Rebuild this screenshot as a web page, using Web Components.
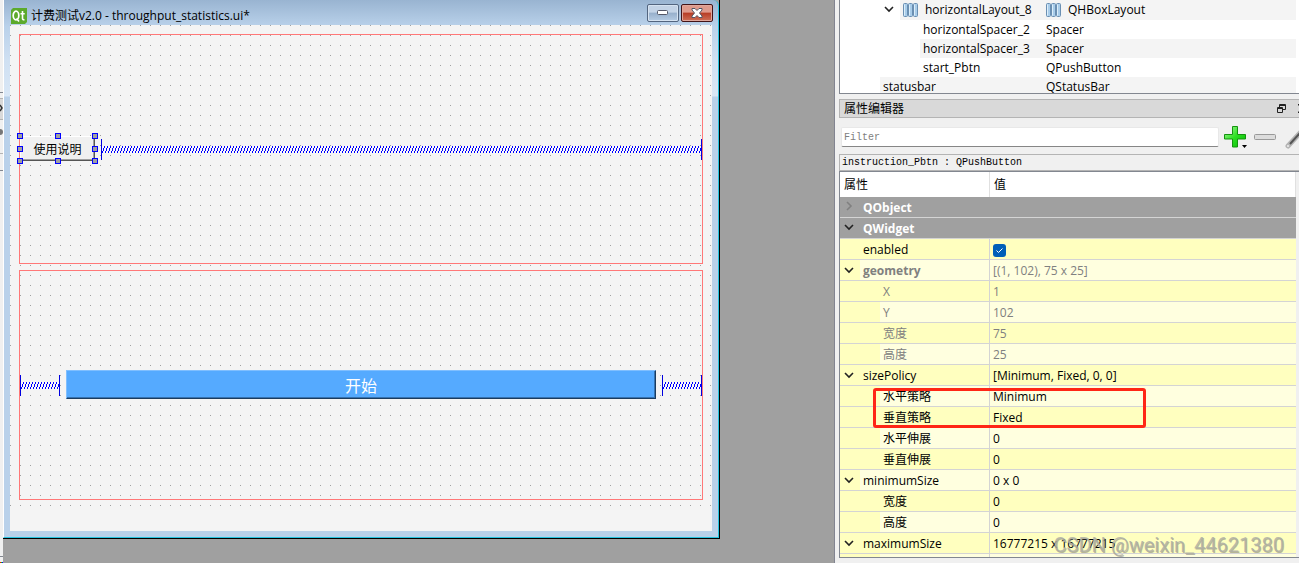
<!DOCTYPE html>
<html lang="zh-CN">
<head>
<meta charset="utf-8">
<title>Qt Designer</title>
<style>
html, body { height: 100%; margin: 0; }
body { display: flex; overflow: hidden; background: #f0f0f0; color: #000; font: 12px/16px "Open Sans", "Noto Sans CJK SC", sans-serif; }
</style>
</head>
<body>
<edge-strip></edge-strip>
<form-stage>
  <form-window heading="计费测试v2.0 - throughput_statistics.ui*">
    <layout-box>
      <push-button selected>使用说明</push-button>
      <h-spacer grow></h-spacer>
    </layout-box>
    <layout-box>
      <h-spacer></h-spacer>
      <push-button primary>开始</push-button>
      <h-spacer></h-spacer>
    </layout-box>
  </form-window>
</form-stage>
<side-panel>
  <object-tree></object-tree>
  <dock-title>属性编辑器</dock-title>
  <filter-bar></filter-bar>
  <object-label>instruction_Pbtn : QPushButton</object-label>
  <property-table></property-table>
</side-panel>
<water-mark>CSDN @weixin_44621380</water-mark>

<script>
const define = (name, html, setup) => customElements.define(name, class extends HTMLElement {
  connectedCallback() {
    if (this.shadowRoot) return;
    const root = this.attachShadow({ mode: "open" });
    root.innerHTML = html;
    if (setup) setup(root, this);
  }
});

define("edge-strip", `
<style>
:host { flex: none; width: 3px; display: flex; flex-direction: column; background: #f0f0f0; }
.a { height: 92px; border-bottom: 1px solid #828790; }
.b { height: 22px; margin-top: 5px; background: #d9d9d9; border: solid #b4b4b4; border-width: 1px 0; box-sizing: border-box; overflow: hidden; }
.c { height: 33px; border-bottom: 1px solid #b4b4b4; }
.d { height: 16px; border-bottom: 1px solid #828790; }
.e { flex: 1; }
.f { height: 5px; border-top: 1px solid #828790; }
.g { height: 1px; background: linear-gradient(90deg, #f00 33%, #0c0 33% 66%, #00f 66%); }
svg { display: block; }
</style>
<div class="a"></div>
<div class="b"><svg width="3" height="20"><path d="M0 6l2 3-2 3" fill="none" stroke="#333" stroke-width="1.5"/></svg></div>
<div class="c"><svg width="3" height="33"><circle cx="0" cy="12" r="3" fill="#777"/></svg></div>
<div class="d"></div><div class="e"></div><div class="f"></div><div class="g"></div>`);

define("form-stage", `
<style>
:host { flex: 1; min-width: 0; display: flex; background: #a0a0a0; border-right: 1px solid #828490; padding: 0 114px 24px 0; }
</style><slot></slot>`);

define("form-window", `
<style>
:host { flex: 1; min-width: 0; display: flex; flex-direction: column; box-sizing: border-box;
  border: solid #000; border-width: 0 1px 1px 0; }
.frame { flex: 1; display: flex; flex-direction: column; padding: 0 6px 6px; border: solid #27c4e0; border-width: 0 1px 1px 0; border-left: 1px solid #fff;
  background: linear-gradient(#99b4d1, #b9d1ea 26px, #cfe0f2 60px, #d9e7f6 96px, #b9d1ea 97px); border-top-right-radius: 6px; }
header { height: 25px; display: flex; align-items: center; gap: 4px; box-sizing: border-box; padding: 8px 0 2px 1px; }
header svg { display: block; flex: none; }
h1 { margin: 0; flex: 1; font: 12px/16px "Open Sans", "Noto Sans CJK SC", sans-serif; white-space: nowrap; }
.controls { display: flex; gap: 2px; align-self: flex-start; margin-top: -4px; margin-right: -1px; }
button { padding: 0; width: 32px; height: 18px; box-sizing: border-box; border: 1px solid #53657f; border-radius: 2px; box-shadow: inset 0 0 0 1px #d6e3f1; background: linear-gradient(#c3d3e6 45%, #97afcb 50%, #b5cbe3); display: grid; place-items: center; }
.close { border-color: #431418; box-shadow: inset 0 0 0 1px #e0a79c; background: linear-gradient(#df9a8c 45%, #b73c25 50%, #cf7058); }
.body { flex: 1; display: flex; flex-direction: column; background: #f4f4f4; }
main { flex: 1; display: flex; flex-direction: column; gap: 6px; padding: 9px;
  background: conic-gradient(from 270deg at 1px 1px, #a0a0a0 90deg, transparent 0) 0 0 / 10px 10px; }
footer { height: 22px; }
</style>
<div class="frame">
  <header>
    <svg width="16" height="16" viewBox="0 0 16 16"><path d="M2 0h14v14l-2 2H0V2z" fill="#5caa2c"/><g fill="none" stroke="#fff"><ellipse cx="5" cy="7.500" rx="2.800" ry="4.300" stroke-width="1.700"/><path d="M5.500 10.500l2.500 3M11.500 3v7.500q0 1.500 2 1.200M9.500 5.800h4.200" stroke-width="1.600"/></g></svg>
    <h1></h1>
    <div class="controls">
      <button aria-label="最小化"><svg width="12" height="6"><rect x=".5" y=".5" width="10" height="4" rx="1" fill="#fff" stroke="#535666"/></svg></button>
      <button class="close" aria-label="关闭"><svg width="12" height="10" viewBox="0 0 12 10"><path d="M1 .5h3L6 2.500 8 .5h3v1.500L8.500 5 11 8v1.500H8L6 7.500 4 9.500H1V8l2.500-3L1 2z" fill="#fff" stroke="#535666"/></svg></button>
    </div>
  </header>
  <div class="body"><main><slot></slot></main><footer></footer></div>
</div>`, (r, el) => { r.querySelector("h1").textContent = el.getAttribute("heading"); });

define("layout-box", `
<style>
:host { flex: 1; display: flex; align-items: center; gap: 6px; box-sizing: border-box; border: 1px solid #ff7878; }
</style><slot></slot>`);

define("h-spacer", `
<style>
:host { flex: none; width: 40px; height: 21px; box-sizing: border-box; border: solid #0000e0; border-width: 0 1px; }
:host([grow]) { flex: 1; }
svg { display: block; width: 100%; height: 21px; }
</style>
<svg><defs><pattern id="p" width="3" height="21" patternUnits="userSpaceOnUse"><g shape-rendering="crispEdges"><rect y="7" width="3" height="7" fill="#fafafa"/><path d="M2 7h1v2h-1zM1 9h1v3h-1zM0 12h1v2h-1z" fill="#0000ff"/></g></pattern></defs><rect width="100%" height="21" fill="url(#p)"/></svg>`);

define("push-button", `
<style>
:host { position: relative; display: block; flex: none; width: 75px; height: 25px; margin-bottom: 1px; }
button { display: block; width: 100%; height: 100%; box-sizing: border-box; padding: 0; border: 1px solid; border-color: #fff #555 #555 #fff; box-shadow: inset -1px -1px #a0a0a0; background: #f0f0f0; color: #000; font: 12px/16px "Noto Sans CJK SC", sans-serif; }
:host([primary]) { flex: 1; height: 29px; }
:host([primary]) button { background: #55aaff; color: #fff; border-color: #80bfff #1a3c60 #1a3c60 #80bfff; box-shadow: inset -1px -1px #3672b0; font-size: 16px; line-height: 24px; }
.grips { display: none; }
:host([selected]) .grips { position: absolute; inset: -3px; display: grid; grid-template-columns: repeat(3, 6px); justify-content: space-between; align-content: space-between; pointer-events: none; }
i { width: 6px; height: 6px; box-sizing: border-box; border: 1px solid #00f; background: #a0a0a0; }
i:nth-child(5) { visibility: hidden; }
</style>
<button><slot></slot></button><div class="grips">${"<i></i>".repeat(9)}</div>`);

define("side-panel", `
<style>
:host { flex: none; width: 460px; padding-left: 4px; display: flex; flex-direction: column; overflow: hidden; }
</style><slot></slot>`);

const columnsIcon = `<svg width="15" height="14" viewBox="0 0 15 14"><g fill="#a9cdea" stroke="#6a8fb2"><rect x=".5" y=".5" width="4" height="13" rx="1"/><rect x="5.500" y=".5" width="4" height="13" rx="1"/><rect x="10.500" y=".5" width="4" height="13" rx="1"/></g><path d="M1.500 1.500v11M6.500 1.500v11M11.500 1.500v11" stroke="#dceefa"/></svg>`;
const chevron = `<svg class="chev" width="10" height="10" viewBox="0 0 10 10"><path d="M1 3l4 4 4-4" fill="none" stroke="currentColor" stroke-width="1.600"/></svg>`;

define("object-tree", `
<style>
:host { display: block; height: 94px; box-sizing: border-box; border: solid #828790; border-width: 0 0 1px 1px; background: #fff; padding-right: 3px; overflow: hidden; }
table { width: 100%; border-collapse: collapse; table-layout: fixed; }
tr { height: 19px; }
tr:first-child { height: 20px; }
td { padding: 0; white-space: nowrap; line-height: 18px; }
td:first-child { width: 203px; }
.cell { display: flex; align-items: center; gap: 7px; height: 19px; box-sizing: border-box; padding-left: 3px; }
tr:first-child .cell { height: 20px; }
.alt .cell, .alt td + td { background: #f4f4f4; }
.d1 { margin-left: 40px; }
.d2 { margin-left: 60px; position: relative; }
.d2 .chev { position: absolute; left: -16px; top: 4px; color: #222; }
.d3 { margin-left: 80px; }
</style>
<table><tbody>
<tr class="alt"><td><div class="cell d2">${chevron}${columnsIcon}horizontalLayout_8</div></td><td><div class="cell">${columnsIcon}QHBoxLayout</div></td></tr>
<tr><td><div class="cell d3">horizontalSpacer_2</div></td><td><div class="cell">Spacer</div></td></tr>
<tr class="alt"><td><div class="cell d3">horizontalSpacer_3</div></td><td><div class="cell">Spacer</div></td></tr>
<tr><td><div class="cell d3">start_Pbtn</div></td><td><div class="cell">QPushButton</div></td></tr>
<tr class="alt"><td><div class="cell d1">statusbar</div></td><td><div class="cell">QStatusBar</div></td></tr>
</tbody></table>`);

define("dock-title", `
<style>
:host { display: flex; align-items: center; gap: 12px; margin-top: 5px; height: 19px; box-sizing: border-box; border: 1px solid #b4b4b4; border-right: 0; background: #d9d9d9; padding-left: 4px; }
h2 { flex: 1; margin: 0; font: inherit; }
button { border: 0; padding: 0; background: none; height: 10px; display: block; }
svg { display: block; }
</style>
<h2><slot></slot></h2>
<button aria-label="浮动"><svg width="9" height="9"><g fill="none" stroke="#222"><path d="M2.500 3V.5h6v5H6M2 1.500h7"/><path d="M.5 3.500h5v5h-5zM0 4.500h6"/></g></svg></button>
<button aria-label="关闭"><svg width="1" height="9"><path d="M0 0l4 4.500L0 9" fill="none" stroke="#222" stroke-width="1.300"/></svg></button>`);

define("filter-bar", `
<style>
:host { display: flex; align-items: center; height: 36px; box-sizing: border-box; padding: 2px 0 0 2px; gap: 5px; }
input { flex: 1; min-width: 0; height: 20px; box-sizing: border-box; margin: 0; padding: 0 2px; border: 1px solid #e8e8e8; border-bottom-color: #868686; border-radius: 2px; background: #fff; font: 10px/16px "Liberation Mono", monospace; outline: 0; }
input::placeholder { color: #808080; opacity: 1; }
button { border: 0; padding: 0; background: none; display: block; }
svg { display: block; }
.minus { margin-left: 1px; }
.tool { margin-left: 4px; }
</style>
<input type="text" placeholder="Filter" aria-label="Filter">
<button aria-label="添加"><svg width="24" height="24" viewBox="0 0 24 24"><defs><linearGradient id="g" x2="1" y2="1"><stop offset="0" stop-color="#b4f8a8"/><stop offset=".5" stop-color="#2be020"/><stop offset="1" stop-color="#06b806"/></linearGradient></defs><path d="M8.500 1.500h5v8h8v4.500h-8v8h-5v-8h-8V9.500h8z" fill="url(#g)" stroke="#15930f"/><path d="M18 20h5l-2.500 3z" fill="#000"/></svg></button>
<button class="minus" aria-label="删除"><svg width="22" height="8"><rect x=".5" y="1.500" width="21" height="5" rx="1" fill="#dcdcdc" stroke="#999"/></svg></button>
<button class="tool" aria-label="设置"><svg width="14" height="24" viewBox="0 0 14 24"><path d="M3 21L15 8" stroke="#b4b4b4" stroke-width="5" stroke-linecap="round"/><path d="M5 19L15 8" stroke="#555" stroke-width="2"/><circle cx="3" cy="21" r="1" fill="#eee"/></svg></button>`);

define("object-label", `
<style>
:host { display: block; height: 17px; box-sizing: border-box; border: 1px solid #b4b4b4; border-right: 0; padding-left: 2px; font: 10px/15px "Liberation Mono", monospace; white-space: nowrap; }
</style><slot></slot>`);

// [name, value, kind]; kind lists the classes of the row
const rows = [
  ["QObject", null, "group shut"], ["QWidget", null, "group open"],
  ["enabled", true, "flat"], ["geometry", "[(1, 102), 75 x 25]", "open light off strong"],
  ["X", "1", "child off"], ["Y", "102", "child light off"], ["宽度", "75", "child off"], ["高度", "25", "child light off"],
  ["sizePolicy", "[Minimum, Fixed, 0, 0]", "open"],
  ["水平策略", "Minimum", "child light marked"], ["垂直策略", "Fixed", "child"], ["水平伸展", "0", "child light"], ["垂直伸展", "0", "child"],
  ["minimumSize", "0 x 0", "open light"], ["宽度", "0", "child"], ["高度", "0", "child light"],
  ["maximumSize", "16777215 x 16777215", "open"], ["", "", "child light"]
];
define("property-table", `
<style>
:host { flex: 1; min-height: 0; display: block; margin-bottom: 5px; box-sizing: border-box; border: solid #828790; border-width: 1px 0 1px 1px; padding-right: 3px; overflow: hidden; }
table { width: 100%; border-collapse: separate; border-spacing: 0; table-layout: fixed; background: #ffffbf; }
col:first-child { width: 150px; }
th, td { padding: 0 0 0 3px; text-align: left; font-weight: 400; white-space: nowrap; line-height: 18px; }
thead th { height: 25px; background: #fff; border-right: 1px solid #e0e0e0; padding-left: 4px; box-sizing: border-box; }
thead tr { height: 25px; }
tbody tr { height: 21px; }
tbody th, tbody td { height: 21px; box-sizing: border-box; border-bottom: 1px solid #d4d4d4; }
tbody th { padding: 0; border-right: 1px solid #d4d4d4; }
tbody td { padding-top: 2px; }
.name { position: relative; height: 20px; line-height: 22px; margin-left: 20px; padding-left: 3px; }
.child .name { margin-left: 40px; }
.light .name, .light td { background: #ffffdf; }
.off { color: #808080; }
.strong .name, .group .name { font-weight: 700; }
.group th { background: #a0a0a0; color: #fff; border-right: 0; }
.chev { position: absolute; left: -16px; top: 5px; color: #222; }
.group .chev { top: 4px; }
.shut .chev { transform: rotate(-90deg); color: #808080; }
input { appearance: none; display: block; width: 13px; height: 13px; margin: 0; border-radius: 3px; background: #005fb8 url("data:image/svg+xml,%3Csvg xmlns='http://www.w3.org/2000/svg' viewBox='0 0 13 13'%3E%3Cpath d='M3.500 6.500l2 2 4-4' fill='none' stroke='white'/%3E%3C/svg%3E"); }
.mark { position: absolute; z-index: 1; left: -7px; top: 2px; width: 273px; height: 40px; box-sizing: border-box; border: 3px solid #ff2616; border-radius: 3px; pointer-events: none; }
</style>
<table><colgroup><col><col></colgroup><thead><tr><th>属性</th><th>值</th></tr></thead><tbody></tbody></table>`, r => {
  r.querySelector("tbody").innerHTML = rows.map(([name, value, kind]) => {
    const arrow = /open|shut/.test(kind) ? chevron : "";
    const mark = kind.includes("marked") ? '<div class="mark"></div>' : "";
    const head = `<th scope="row"${value === null ? ' colspan="2"' : ""}><div class="name">${arrow}${name}${mark}</div></th>`;
    const cell = value === null ? "" : `<td>${value === true ? '<input type="checkbox" checked aria-label="enabled">' : value}</td>`;
    return `<tr class="${kind}">${head}${cell}</tr>`;
  }).join("");
});

define("water-mark", `
<style>
:host { position: absolute; right: 15px; bottom: 6px; z-index: 2; font: 20px/24px Roboto, sans-serif; color: rgba(175, 175, 165, .85); text-shadow: 1px 1px rgba(110, 110, 110, .5); white-space: nowrap; pointer-events: none; }
</style><slot></slot>`);
</script>
</body>
</html>
